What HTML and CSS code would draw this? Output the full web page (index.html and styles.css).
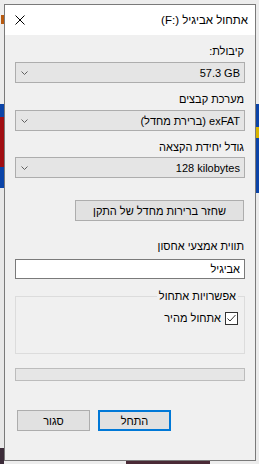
FILE: index.html
```html
<!DOCTYPE html>
<html lang="he" dir="rtl">
<head>
<meta charset="utf-8">
<title>אתחול</title>
<link rel="stylesheet" href="styles.css">
</head>
<body>
<div class="desk">
  <div class="window">
    <div class="titlebar">
      <span class="title">אתחול אביגיל (<bdi dir="ltr">F:</bdi>)</span>
      <span class="close"><svg width="10" height="10" viewBox="0 0 10 10"><path d="M0.5 0.5 L9.5 9.5 M9.5 0.5 L0.5 9.5" stroke="#000" stroke-width="1" fill="none"/></svg></span>
    </div>
    <div class="content">
      <div class="label first">קיבולת:</div>
      <div class="combo">
        <bdi class="val" dir="ltr">57.3 GB</bdi>
        <svg class="chev" width="7" height="4" viewBox="0 0 7 4"><path d="M0.5 0.5 L3.5 3.5 L6.5 0.5" stroke="#606060" stroke-width="1" fill="none"/></svg>
      </div>
      <div class="label">מערכת קבצים</div>
      <div class="combo">
        <span class="val">exFAT (ברירת מחדל)</span>
        <svg class="chev" width="7" height="4" viewBox="0 0 7 4"><path d="M0.5 0.5 L3.5 3.5 L6.5 0.5" stroke="#606060" stroke-width="1" fill="none"/></svg>
      </div>
      <div class="label">גודל יחידת הקצאה</div>
      <div class="combo tight">
        <bdi class="val" dir="ltr">128 kilobytes</bdi>
        <svg class="chev" width="7" height="4" viewBox="0 0 7 4"><path d="M0.5 0.5 L3.5 3.5 L6.5 0.5" stroke="#606060" stroke-width="1" fill="none"/></svg>
      </div>
      <div class="btn restore">שחזר ברירות מחדל של התקן</div>
      <div class="label vol">תווית אמצעי אחסון</div>
      <input class="field" type="text" value="אביגיל">
      <fieldset class="group">
        <legend class="legend">אפשרויות אתחול</legend>
        <div class="check-row">
          <svg class="checkbox" width="13" height="13" viewBox="0 0 13 13"><rect x="0.5" y="0.5" width="12" height="12" fill="#fff" stroke="#333"/><path d="M2.5 6.5 L5 9 L10.5 3" stroke="#333" stroke-width="1" fill="none"/></svg>
          <span class="check-label">אתחול מהיר</span>
        </div>
      </fieldset>
      <div class="progress"></div>
      <div class="actions">
        <div class="btn action default">התחל</div>
        <div class="btn action">סגור</div>
      </div>
    </div>
  </div>
</div>
</body>
</html>
```

FILE: styles.css
```css
html, body {
  margin: 0;
  padding: 0;
}

body {
  font-family: "Liberation Sans", "DejaVu Sans", sans-serif;
  font-size: 11px;
  line-height: 14px;
  color: #000;
}

.desk {
  width: 259px;
  height: 464px;
  box-sizing: border-box;
  padding: 4px 3px 3px 4px;
  background:
    linear-gradient(#4a2a36, #4a2a36) 126px 461px / 84px 3px no-repeat,
    linear-gradient(#b85a10, #b85a10) 1px 15px / 3px 9px no-repeat,
    linear-gradient(to bottom, #ececec 0 104px, #0b44a8 104px 127px, #d8b400 127px 138px, #0b44a8 138px 193px, #ebebeb 193px) 256px 0 / 3px 464px no-repeat,
    linear-gradient(to bottom, #ececec 0 104px, #0b44a8 104px 117px, #a00d12 117px 167px, #0b44a8 167px 188px, #e8e8e8 188px 448px, #3b2b38 448px) 0 0 / 4px 464px no-repeat,
    #ededed;
}

.window {
  width: 252px;
  height: 457px;
  box-sizing: border-box;
  border: 1px solid #7a7a7a;
  background: #f0f0f0;
  display: flex;
  flex-direction: column;
}

.titlebar {
  height: 30px;
  flex: none;
  background: #fff;
  display: flex;
  align-items: center;
  justify-content: space-between;
  padding: 0 7px 0 10px;
}

.title {
  font-size: 11.5px;
  line-height: 14px;
}

.close {
  display: flex;
  width: 10px;
  height: 10px;
}

.content {
  display: flex;
  flex-direction: column;
  padding: 0 10px;
}

.label {
  height: 14px;
  margin-top: 9px;
  padding-right: 1px;
}

.combo {
  margin-top: 4px;
  height: 21px;
  box-sizing: border-box;
  border: 1px solid #adadad;
  background: #e5e5e5;
  display: flex;
  align-items: center;
  justify-content: space-between;
  padding: 0 4px 0 5px;
}

.combo.tight {
  margin-top: 3px;
}

.chev {
  display: block;
}

.btn {
  height: 21px;
  box-sizing: border-box;
  border: 1px solid #adadad;
  background: #e1e1e1;
  display: flex;
  align-items: center;
  justify-content: center;
}

.restore {
  margin-top: 22px;
  width: 169px;
  margin-right: 1px;
  align-self: flex-start;
}

.label.vol {
  margin-top: 18px;
}

.field {
  margin: 6px 0 0;
  height: 20px;
  box-sizing: border-box;
  border: 1px solid #7a7a7a;
  background: #fff;
  padding: 0 4px;
  font: inherit;
  color: #000;
  text-align: right;
  outline: none;
}

.group {
  margin: 10px 0 0;
  min-width: 0;
  border: 1px solid #dcdcdc;
  padding: 0 6px 28px 6px;
}

.legend {
  padding: 0 2px;
  line-height: 14px;
}

.check-row {
  margin-top: 8px;
  height: 14px;
  display: flex;
  align-items: center;
  gap: 4px;
}

.checkbox {
  display: block;
  flex: none;
}

.progress {
  margin-top: 14px;
  height: 13px;
  box-sizing: border-box;
  border: 1px solid #bcbcbc;
  background: #e6e6e6;
}

.actions {
  margin-top: 29px;
  display: flex;
  justify-content: flex-end;
  gap: 8px;
  padding-left: 2px;
}

.action {
  width: 73px;
}

.action.default {
  border: 2px solid #0078d7;
}
```
